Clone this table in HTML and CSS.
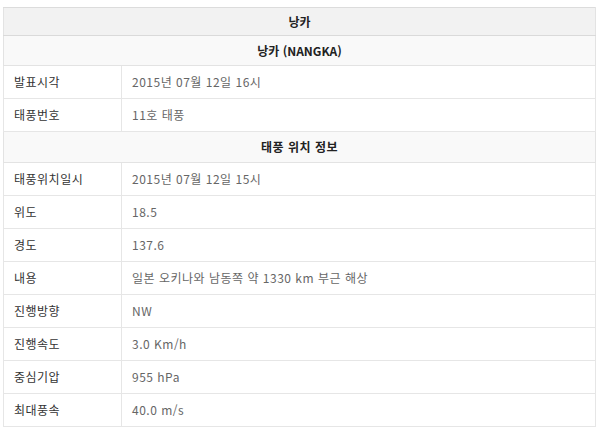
FILE: index.html
```html
<!DOCTYPE html>
<html lang="ko">
<head>
<meta charset="utf-8">
<link rel="stylesheet" href="styles.css">
</head>
<body>
<table class="info">
  <colgroup><col class="c1"><col class="c2"></colgroup>
  <tr class="h1"><th colspan="2">낭카</th></tr>
  <tr class="h2"><th colspan="2">낭카 (NANGKA)</th></tr>
  <tr><td class="k">발표시각</td><td class="v">2015년 07월 12일 16시</td></tr>
  <tr><td class="k">태풍번호</td><td class="v">11호 태풍</td></tr>
  <tr class="h3"><th colspan="2">태풍 위치 정보</th></tr>
  <tr><td class="k">태풍위치일시</td><td class="v">2015년 07월 12일 15시</td></tr>
  <tr><td class="k">위도</td><td class="v">18.5</td></tr>
  <tr><td class="k">경도</td><td class="v">137.6</td></tr>
  <tr><td class="k">내용</td><td class="v">일본 오키나와 남동쪽 약 1330 km 부근 해상</td></tr>
  <tr><td class="k">진행방향</td><td class="v">NW</td></tr>
  <tr><td class="k">진행속도</td><td class="v">3.0 Km/h</td></tr>
  <tr><td class="k">중심기압</td><td class="v">955 hPa</td></tr>
  <tr><td class="k">최대풍속</td><td class="v">40.0 m/s</td></tr>
</table>
</body>
</html>
```
FILE: styles.css
```css
html, body {
  margin: 0;
  background: #fff;
}
body {
  padding: 7px 0 0 3px;
  font-family: "Noto Sans CJK KR", "Noto Sans", sans-serif;
  font-size: 12px;
}
.info {
  width: 593px;
  border-collapse: collapse;
  table-layout: fixed;
  border: 1px solid #dcdcdc;
}
.c1 { width: 118px; }
.info th {
  font-weight: bold;
  color: #222;
  text-align: center;
  padding: 0;
  border: 1px solid #e3e3e3;
}
.h1 th {
  background: #f2f2f2;
  line-height: 27px;
  border-bottom: 1px solid #dadada;
  border-top: 1px solid #dcdcdc;
}
.h2 th {
  background: #f9f9f9;
  line-height: 29px;
}
.h3 th {
  background: #f9f9f9;
  line-height: 30px;
  letter-spacing: 0.5px;
}
.info td {
  line-height: 32px;
  padding: 0 0 0 10px;
  border: 1px solid #e6e6e6;
  white-space: nowrap;
  letter-spacing: 0.5px;
}
.k { color: #333; }
.v { color: #666; padding-left: 11px; }
```
